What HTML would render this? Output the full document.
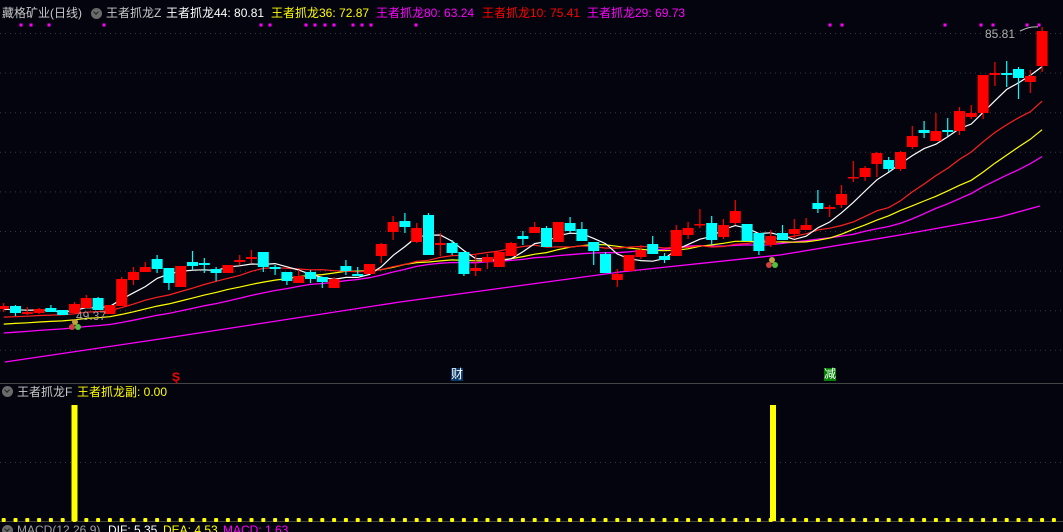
<!DOCTYPE html>
<html><head><meta charset="utf-8"><style>
html,body{margin:0;padding:0;background:#04040e;width:1063px;height:532px;overflow:hidden}
body{position:relative;font-family:"Liberation Sans","Noto Sans CJK SC",sans-serif;font-size:12px}
.t{position:absolute;white-space:nowrap;line-height:14px}
svg{position:absolute;left:0;top:0}
.ic{position:absolute;width:11px;height:11px;border-radius:50%;background:#6a6a6a}
.ic:after{content:"";position:absolute;left:3px;top:2px;width:3px;height:3px;border-right:1.5px solid #222;border-bottom:1.5px solid #222;transform:rotate(45deg)}
</style></head><body>
<svg id="s" width="1063" height="532"></svg>
<div class="t" style="left:2px;top:6px;color:#c8c8c8">藏格矿业(日线)</div>
<div class="ic" style="left:91px;top:8px"></div>
<div class="t" style="left:106px;top:6px;color:#c8c8c8">王者抓龙Z</div>
<div class="t" style="left:166px;top:6px;color:#ffffff">王者抓龙44: 80.81</div>
<div class="t" style="left:271px;top:6px;color:#ffff00">王者抓龙36: 72.87</div>
<div class="t" style="left:376px;top:6px;color:#ff00ff">王者抓龙80: 63.24</div>
<div class="t" style="left:482px;top:6px;color:#ff0000">王者抓龙10: 75.41</div>
<div class="t" style="left:587px;top:6px;color:#ff00ff">王者抓龙29: 69.73</div>
<div class="t" style="left:985px;top:27px;color:#b0b0b0;font-size:12px">85.81</div>
<div class="t" style="left:76px;top:309px;color:#a0a0a0;font-size:12px">49.37</div>
<div class="t" style="left:172px;top:370px;color:#ff0000;font-weight:bold">Ş</div>
<div class="t" style="left:451px;top:368px;color:#fff;background:#0a3a6a;font-size:12px;line-height:13px">财</div>
<div class="t" style="left:824px;top:368px;color:#fff;background:#008000;font-size:12px;line-height:13px">减</div>
<div class="ic" style="left:2px;top:386px"></div>
<div class="t" style="left:17px;top:385px;color:#c8c8c8">王者抓龙F</div>
<div class="t" style="left:77px;top:385px;color:#ffff00">王者抓龙副: 0.00</div>
<div class="ic" style="left:2px;top:525px"></div>
<div class="t" style="left:17px;top:523px;color:#a0a0a0">MACD(12,26,9)</div>
<div class="t" style="left:108px;top:523px;color:#fff">DIF: 5.35</div>
<div class="t" style="left:163px;top:523px;color:#ffff00">DEA: 4.53</div>
<div class="t" style="left:223px;top:523px;color:#ff00ff">MACD: 1.63</div>
<script>
var C=[
['r',306,309,303,312],['c',306,313,305,316],['r',312,314,307,315],['r',309,313,308,314],['c',308,312,305,312],['c',310,315,310,315],
['r',304,313,302,313],['r',298,308,295,308],['c',298,310,297,310],['r',305,314,305,314],['r',279,306,277,306],['r',272,280,267,285],
['r',267,272,262,272],['c',259,269,255,273],['c',268,283,268,290],['r',266,287,266,287],['c',262,266,251,270],['c',263,265,258,273],
['c',269,273,267,281],['r',265,273,265,273],['r',260,262,255,265],['r',257,259,250,263],['c',252,267,252,272],['c',267,269,265,275],
['c',272,281,272,285],['r',276,283,270,283],['c',272,279,270,283],['c',277,282,277,288],['r',279,288,277,288],['c',266,271,260,275],
['c',274,276,267,276],['r',264,274,264,274],['r',244,256,243,263],['r',222,232,216,240],['c',221,227,213,233],['r',228,242,223,243],
['c',215,255,213,255],['r',243,245,233,256],['c',243,253,240,255],['c',252,274,252,276],['r',268,271,254,276],['r',257,262,254,269],
['r',252,267,252,267],['r',243,256,242,256],['c',236,239,231,245],['r',227,233,222,233],['c',228,247,226,247],['r',222,242,222,242],
['c',223,231,217,233],['c',229,241,222,241],['c',242,251,242,265],['c',254,273,252,273],['r',274,280,269,287],['r',255,271,255,271],
['r',250,257,245,259],['c',244,254,236,254],['c',256,260,253,263],['r',230,256,225,256],['r',228,235,222,239],['r',224,225,209,228],
['c',223,240,216,245],['r',225,237,219,239],['r',211,223,200,225],['c',224,241,224,241],['c',233,251,233,255],['r',236,245,230,247],
['c',233,240,225,240],['r',229,234,219,239],['r',225,230,218,230],['c',203,209,190,213],['r',207,209,205,217],['r',194,205,185,208],
['r',177,178,161,182],['r',168,177,166,181],['r',153,164,152,177],['c',160,169,157,172],['r',152,169,151,171],['r',136,147,126,149],
['c',130,133,121,138],['r',131,141,113,141],['c',130,132,118,136],['r',111,131,107,135],['r',113,117,105,119],['r',75,113,75,119],
['r',73,75,62,86],['c',73,75,61,87],['c',69,78,67,99],['r',76,82,70,93],['r',31,66,27,72]];
var h='',X=function(i){return 3.7+11.8*i};
for(var k=0;k<9;k++){var y=(33.5+39.6*k).toFixed(1);h+='<line x1="0" x2="1063" y1="'+y+'" y2="'+y+'" stroke="#3a3a3a" stroke-dasharray="1,4"/>';}
h+='<line x1="0" x2="1063" y1="462.5" y2="462.5" stroke="#3a3a3a" stroke-dasharray="1,4"/>';
h+='<line x1="0" x2="1063" y1="383.5" y2="383.5" stroke="#444"/>';
h+='<line x1="0" x2="1063" y1="521.5" y2="521.5" stroke="#444"/>';
[21,31,49,104,261,270,306,315,325,334,353,362,371,416,830,842,945,981,993,1027,1039].forEach(function(x){h+='<rect x="'+(x-1.5)+'" y="23.5" width="3" height="3" fill="#ff00ff"/>';});
var cl=C.map(function(c){return c[0]=='r'?c[1]:c[2]});
function ma(n,pad){var p=[];for(var i=0;i<cl.length;i++){var s=0;for(var j=i-n+1;j<=i;j++)s+=(j<0?pad:cl[j]);p.push(X(i).toFixed(1)+','+(s/n).toFixed(1));}return p.join(' ');}
h+='<polyline points="5,362 160,339 400,302 620,272 780,255 900,235 1000,217 1040,206" fill="none" stroke="#ff00ff" stroke-width="1.3"/>';
h+='<polyline points="'+ma(27,334)+'" fill="none" stroke="#ff00ff" stroke-width="1.3"/>';
h+='<polyline points="'+ma(20,325)+'" fill="none" stroke="#ffff00" stroke-width="1.2"/>';
h+='<polyline points="'+ma(13,318)+'" fill="none" stroke="#ff2020" stroke-width="1.2"/>';
h+='<polyline points="'+ma(5,310)+'" fill="none" stroke="#ffffff" stroke-width="1.2"/>';
C.forEach(function(c,i){var col=c[0]=='r'?'#ff0000':'#00ffff',x=X(i),bh=Math.max(c[2]-c[1],1.5);
h+='<line x1="'+x+'" x2="'+x+'" y1="'+c[3]+'" y2="'+c[4]+'" stroke="'+col+'" stroke-width="1.2"/>';
h+='<rect x="'+(x-5.5)+'" y="'+c[1]+'" width="11" height="'+bh+'" fill="'+col+'"/>';});
function fr(x,y){return '<circle cx="'+x+'" cy="'+(y-4)+'" r="3" fill="#c0a040"/><circle cx="'+(x-3)+'" cy="'+(y+1)+'" r="3" fill="#d04040"/><circle cx="'+(x+3)+'" cy="'+(y+1)+'" r="3" fill="#50c040"/>';}
h+=fr(75,326)+fr(772,264);
h+='<path d="M1020,31 Q1030,26 1038,27" stroke="#bbb" fill="none"/>';
h+='<rect x="71.5" y="405" width="6" height="116" fill="#ffff00"/><rect x="770" y="405" width="6" height="116" fill="#ffff00"/>';
for(var i=0;i<90;i++){h+='<rect x="'+(X(i)-2)+'" y="518" width="4" height="4" rx="1" fill="#ffff00"/>';}
document.getElementById('s').innerHTML=h;
</script>
</body></html>
